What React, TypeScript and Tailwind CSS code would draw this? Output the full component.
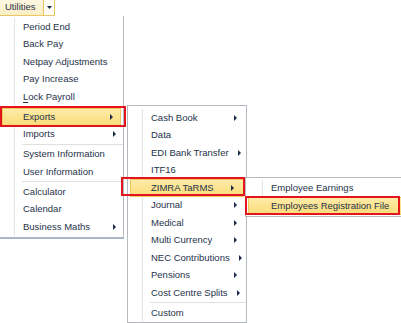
import React from 'react'

type Item = {
  label: string
  sub?: boolean
  sep?: boolean
  active?: boolean
  ul?: boolean
}

const utilities: Item[] = [
  { label: 'Period End' },
  { label: 'Back Pay' },
  { label: 'Netpay Adjustments' },
  { label: 'Pay Increase' },
  { label: 'Lock Payroll', ul: true },
  { label: '', sep: true },
  { label: 'Exports', sub: true, active: true },
  { label: 'Imports', sub: true },
  { label: '', sep: true },
  { label: 'System Information' },
  { label: 'User Information' },
  { label: '', sep: true },
  { label: 'Calculator' },
  { label: 'Calendar' },
  { label: 'Business Maths', sub: true },
]

const exportsMenu: Item[] = [
  { label: 'Cash Book', sub: true },
  { label: 'Data' },
  { label: 'EDI Bank Transfer', sub: true },
  { label: 'ITF16' },
  { label: 'ZIMRA TaRMS', sub: true, active: true },
  { label: 'Journal', sub: true },
  { label: 'Medical', sub: true },
  { label: 'Multi Currency', sub: true },
  { label: 'NEC Contributions', sub: true },
  { label: 'Pensions', sub: true },
  { label: 'Cost Centre Splits', sub: true },
  { label: '', sep: true },
  { label: 'Custom' },
]

const zimraMenu: Item[] = [
  { label: 'Employee Earnings' },
  { label: 'Employees Registration File', active: true },
]

const Arrow = () => (
  <svg width="3" height="6" viewBox="0 0 3 6" className="shrink-0">
    <path d="M0 0 L3 3 L0 6 Z" fill="#1b2a48" />
  </svg>
)

// one popup; icon column + text column, like the old office 2010 menus
const Menu = ({ items, iconW, arrowCol }: { items: Item[]; iconW: string; arrowCol: string }) => (
  <div className="relative">
    <div className={`absolute top-0 bottom-0 ${iconW} border-r border-[#e3e3e3]`} />
    {items.map((it, i) =>
      it.sep ? (
        <div key={i} className="h-[2.5px] flex items-center">
          <div className={`${iconW} shrink-0`} />
          <div className="flex-1 ml-[7px] h-px bg-[#e0e0e0]" />
        </div>
      ) : (
        <div
          key={i}
          className={`relative h-[17.5px] flex items-center ${
            it.active ? 'mx-[2px] bg-gradient-to-b from-[#fdeba8] to-[#fbdc78] border border-[#f0c75a]' : ''
          }`}
        >
          <div className={`${iconW} shrink-0 ${it.active ? '-ml-[3px]' : ''}`} />
          <span className="pl-[8px] flex-1 whitespace-nowrap">
            {it.ul ? (
              <>
                <span className="underline underline-offset-2">{it.label[0]}</span>
                {it.label.slice(1)}
              </>
            ) : (
              it.label
            )}
          </span>
          {arrowCol !== '' && <div className={`${arrowCol} shrink-0 flex justify-center`}>{it.sub && <Arrow />}</div>}
        </div>
      )
    )}
  </div>
)

export default function App() {
  return (
    <div
      className="relative w-[401px] h-[323px] bg-white overflow-hidden text-[9.5px] text-[#26324a]"
      style={{ fontFamily: '"Segoe UI", "Liberation Sans", Arial, sans-serif' }}
    >
      {/* toolbar button */}
      <div className="flex h-[16px]">
        <div className="w-[44px] flex items-center pl-[5px] bg-gradient-to-b from-[#fdf7e1] to-[#fbeec4] border-r border-b border-[#e9c767]">
          Utilities
        </div>
        <div className="w-[11px] flex items-center justify-center bg-[#fffdf6] border-r border-b border-[#e9c767]">
          <svg width="5" height="3" viewBox="0 0 5 3">
            <path d="M0 0 H5 L2.5 3 Z" fill="#1b2a48" />
          </svg>
        </div>
      </div>

      {/* Utilities dropdown */}
      <div className="absolute left-0 top-[16px] w-[124px] bg-white border-r border-b border-[#b4b9c0] shadow-[0_1px_0_#9fb4cf] pt-[2px] pb-[1px]">
        <Menu items={utilities} iconW="w-[15px]" arrowCol="w-[18px]" />
      </div>

      {/* Exports submenu */}
      <div className="absolute left-[127px] top-[105px] w-[120px] bg-white border border-[#b4b9c0] shadow-[0_1px_0_#9fb4cf] pt-[3px]">
        <Menu items={exportsMenu} iconW="w-[15px]" arrowCol="w-[22px]" />
      </div>

      {/* ZIMRA TaRMS submenu */}
      <div className="absolute left-[245px] top-[177px] w-[170px] bg-white border border-[#b4b9c0] pt-[1.5px] pb-[1.5px]">
        <Menu items={zimraMenu} iconW="w-[17px]" arrowCol="" />
      </div>

      {/* red annotation boxes */}
      <div className="absolute left-0 top-[106px] w-[126px] h-[21px] border-2 border-[#e3141b]" />
      <div className="absolute left-[121px] top-[177px] w-[124px] h-[19px] border-2 border-[#e3141b]" />
      <div className="absolute left-[245px] top-[196px] w-[155px] h-[19px] border-2 border-[#e3141b]" />
    </div>
  )
}
